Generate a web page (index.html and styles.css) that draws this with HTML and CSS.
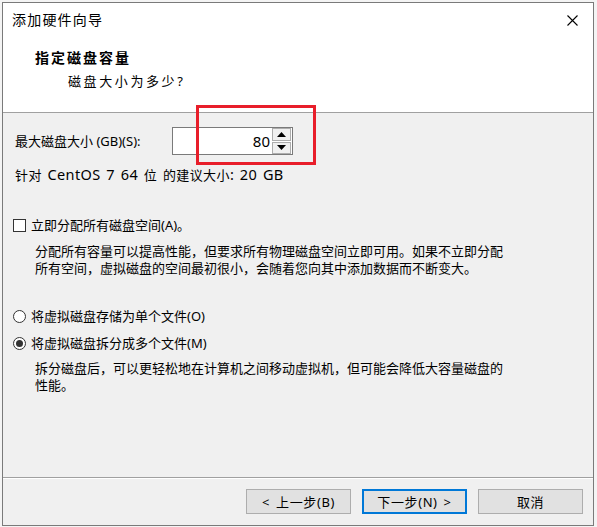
FILE: index.html
```html
<!DOCTYPE html>
<html>
<head>
  <meta charset="UTF-8">
  <link rel="stylesheet" href="styles.css">
</head>
<body>
  <div class="dlg">
    <!-- шапка мастера -->
    <div class="dlg-header">
      <div class="dlg-titlebar">
        <span class="dlg-title">添加硬件向导</span>
        <span class="dlg-close">
          <svg width="11" height="11" viewBox="0 0 11 11"><path d="M0.5 0.5 L10.5 10.5 M10.5 0.5 L0.5 10.5" stroke="#000" stroke-width="1.1" fill="none"/></svg>
        </span>
      </div>
      <div class="dlg-heading">指定磁盘容量</div>
      <div class="dlg-sub">磁盘大小为多少?</div>
    </div>

    <!-- основное содержимое -->
    <div class="dlg-content">
      <div class="size-row">
        <div class="size-label">最大磁盘大小 (GB)(S):</div>
        <div class="spin">
          <div class="spin-value">80</div>
          <div class="spin-buttons">
            <div class="spin-btn">
              <svg width="9" height="5" viewBox="0 0 9 5"><path d="M4.5 0 L9 5 L0 5 Z" fill="#000"/></svg>
            </div>
            <div class="spin-btn">
              <svg width="9" height="5" viewBox="0 0 9 5"><path d="M0 0 L9 0 L4.5 5 Z" fill="#000"/></svg>
            </div>
          </div>
        </div>
        <div class="mark"></div>
      </div>
      <div class="hint">针对<span class="lat"> CentOS 7 64 </span>位<span class="lat"> </span>的建议大小<span class="lat">: 20 GB</span></div>

      <div class="opt opt-first">
        <span class="check"></span>
        <span>立即分配所有磁盘空间(A)。</span>
      </div>
      <div class="desc">分配所有容量可以提高性能，但要求所有物理磁盘空间立即可用。如果不立即分配<br>所有空间，虚拟磁盘的空间最初很小，会随着您向其中添加数据而不断变大。</div>

      <div class="opt opt-radio1">
        <span class="radio"></span>
        <span>将虚拟磁盘存储为单个文件(O)</span>
      </div>
      <div class="opt opt-radio2">
        <span class="radio checked"></span>
        <span>将虚拟磁盘拆分成多个文件(M)</span>
      </div>
      <div class="desc desc-split">拆分磁盘后，可以更轻松地在计算机之间移动虚拟机，但可能会降低大容量磁盘的<br>性能。</div>
    </div>

    <!-- кнопки -->
    <div class="dlg-footer">
      <div class="btn">&lt; 上一步(B)</div>
      <div class="btn btn-default">下一步(N) &gt;</div>
      <div class="btn">取消</div>
    </div>
  </div>
</body>
</html>
```

FILE: styles.css
```css
body {
  margin: 0;
  padding: 2px;
  background-color: #f4f4f4;
  font-family: "Noto Sans", "Noto Sans CJK SC", sans-serif;
  font-size: 13px;
  color: #000;
}
.dlg {
  width: 592px;
  height: 524px;
  box-sizing: border-box;
  border: 1px solid #7a7a7a;
  background-color: #f0f0f0;
  display: flex;
  flex-direction: column;
}
/* шапка */
.dlg-header {
  height: 109px;
  background-color: #fff;
  border-bottom: 1px solid #a0a0a0;
}
.dlg-titlebar {
  height: 34px;
  display: flex;
  align-items: center;
  justify-content: space-between;
  padding: 0 15px 0 9px;
}
.dlg-title {
  font-size: 14px;
  letter-spacing: 1.2px;
  line-height: 20px;
}
.dlg-close {
  display: flex;
}
.dlg-heading {
  margin-top: 11px;
  padding-left: 32px;
  font-size: 14px;
  font-weight: bold;
  letter-spacing: 2px;
  line-height: 20px;
}
.dlg-sub {
  margin-top: 3px;
  padding-left: 65px;
  letter-spacing: 2.6px;
  line-height: 20px;
}
/* содержимое */
.dlg-content {
  padding: 14px 12px 0 12px;
  line-height: 17px;
}
.size-row {
  position: relative;
  display: flex;
  align-items: center;
  height: 28px;
}
.size-label {
  width: 157px;
}
.spin {
  display: flex;
  width: 121px;
  height: 28px;
  box-sizing: border-box;
  border: 1px solid #7a7a7a;
  background-color: #fff;
}
.spin-value {
  flex: 1;
  text-align: right;
  padding-right: 2px;
  font-size: 15px;
  line-height: 26px;
}
.spin-buttons {
  width: 19px;
  display: flex;
  flex-direction: column;
  gap: 1px;
  padding: 0 1px 0 0;
}
.spin-btn {
  flex: 1;
  display: flex;
  align-items: center;
  justify-content: center;
  background-color: #f0f0f0;
  border: 1px solid #adadad;
}
.mark {
  position: absolute;
  left: 181px;
  top: -22px;
  width: 120px;
  height: 60px;
  box-sizing: border-box;
  border: 3px solid #e81e2a;
}
.hint {
  margin-top: 11px;
  letter-spacing: 0.4px;
  word-spacing: 1.5px;
}
.hint .lat {
  font-size: 14.5px;
}
.opt {
  display: flex;
  align-items: center;
  gap: 5px;
  margin-left: -2px;
}
.opt-first {
  margin-top: 33px;
}
.opt-radio1 {
  margin-top: 31px;
}
.opt-radio2 {
  margin-top: 10px;
}
.check {
  width: 13px;
  height: 13px;
  box-sizing: border-box;
  border: 1px solid #333;
  background-color: #fff;
}
.radio {
  width: 13px;
  height: 13px;
  box-sizing: border-box;
  border: 1px solid #333;
  border-radius: 50%;
  background-color: #fff;
  position: relative;
}
.radio.checked::after {
  content: "";
  position: absolute;
  left: 2px;
  top: 2px;
  width: 7px;
  height: 7px;
  border-radius: 50%;
  background-color: #333;
}
.desc {
  margin-top: 9px;
  padding-left: 20px;
}
.desc-split {
  margin-top: 8px;
}
/* кнопки */
.dlg-footer {
  margin-top: auto;
  border-top: 1px solid #a0a0a0;
  box-shadow: inset 0 1px #fff;
  padding: 11px 10px 11px 0;
  display: flex;
  justify-content: flex-end;
  gap: 11px;
}
.btn {
  width: 105px;
  height: 25px;
  box-sizing: border-box;
  border: 1px solid #adadad;
  background-color: #e1e1e1;
  display: flex;
  align-items: center;
  justify-content: center;
  letter-spacing: 0.6px;
  word-spacing: 2px;
}
.btn-default {
  border: 2px solid #0078d7;
}
```
